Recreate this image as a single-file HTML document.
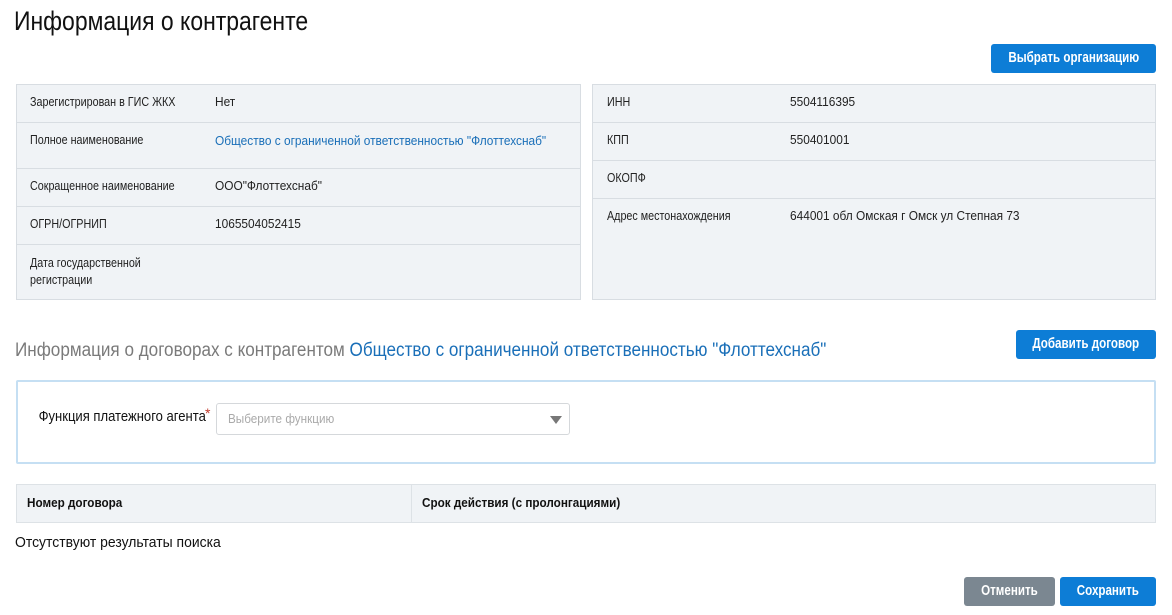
<!DOCTYPE html>
<html><head><meta charset="utf-8"><style>
*{margin:0;padding:0;box-sizing:border-box}
body{width:1172px;height:615px;background:#fff;font-family:"Liberation Sans",sans-serif;color:#222;position:relative;overflow:hidden}
.a{position:absolute;white-space:nowrap}
.c{display:inline-block;transform:scaleX(.84);transform-origin:left center}
.v{display:inline-block;transform:scaleX(.95);transform-origin:left center}
.cr{display:inline-block;transform:scaleX(.9);transform-origin:right center}
.cc{display:inline-block;transform:scaleX(.88);transform-origin:center center}
.panel{position:absolute;background:#f0f3f6;border:1px solid #d8dde2}
.row{position:absolute;left:0;right:0;border-bottom:1px solid #d8dde2}
.t{font-size:12.5px;color:#222}
.btn{position:absolute;color:#fff;font-size:14.5px;text-align:center;border-radius:3px;line-height:29px;background:#0d7dd6;font-weight:bold}
.blue{color:#1a6fb8}
</style></head><body>
<div class="a" style="left:14px;top:6px;font-size:27px;color:#111"><span class="c" style="transform:scaleX(.85)">Информация о контрагенте</span></div>
<div class="btn" style="left:991px;top:44px;width:165px;height:29px"><span class="cc" style="transform:scaleX(.8)">Выбрать организацию</span></div>

<div class="panel" style="left:16px;top:84px;width:565px;height:216px">
 <div class="row" style="top:0;height:38px"></div>
 <div class="row" style="top:38px;height:46px"></div>
 <div class="row" style="top:84px;height:38px"></div>
 <div class="row" style="top:122px;height:38px"></div>
</div>
<div class="a t" style="left:30px;top:95px"><span class="c" style="transform:scaleX(.86)">Зарегистрирован в ГИС ЖКХ</span></div>
<div class="a t" style="left:215px;top:95px"><span class="v">Нет</span></div>
<div class="a t" style="left:30px;top:133px"><span class="c" style="transform:scaleX(.86)">Полное наименование</span></div>
<div class="a t blue" style="left:215px;top:134px"><span class="v">Общество с ограниченной ответственностью "Флоттехснаб"</span></div>
<div class="a t" style="left:30px;top:179px"><span class="c" style="transform:scaleX(.86)">Сокращенное наименование</span></div>
<div class="a t" style="left:215px;top:179px"><span class="v">ООО"Флоттехснаб"</span></div>
<div class="a t" style="left:30px;top:217px"><span class="c" style="transform:scaleX(.86)">ОГРН/ОГРНИП</span></div>
<div class="a t" style="left:215px;top:217px"><span class="v">1065504052415</span></div>
<div class="a t" style="left:30px;top:255px;line-height:17px"><span class="c" style="transform:scaleX(.86)">Дата государственной<br>регистрации</span></div>

<div class="panel" style="left:592px;top:84px;width:564px;height:216px">
 <div class="row" style="top:0;height:38px"></div>
 <div class="row" style="top:38px;height:38px"></div>
 <div class="row" style="top:76px;height:38px"></div>
</div>
<div class="a t" style="left:607px;top:95px"><span class="c" style="transform:scaleX(.86)">ИНН</span></div>
<div class="a t" style="left:790px;top:95px"><span class="v">5504116395</span></div>
<div class="a t" style="left:607px;top:133px"><span class="c" style="transform:scaleX(.86)">КПП</span></div>
<div class="a t" style="left:790px;top:133px"><span class="v">550401001</span></div>
<div class="a t" style="left:607px;top:171px"><span class="c" style="transform:scaleX(.86)">ОКОПФ</span></div>
<div class="a t" style="left:607px;top:209px"><span class="c" style="transform:scaleX(.86)">Адрес местонахождения</span></div>
<div class="a t" style="left:790px;top:209px"><span class="v">644001 обл Омская г Омск ул Степная 73</span></div>

<div class="a" style="left:15px;top:340px;font-size:19px;color:#7a7a7a"><span class="c" style="transform:scaleX(.9)">Информация о договорах с контрагентом <span class="blue">Общество с ограниченной ответственностью "Флоттехснаб"</span></span></div>
<div class="btn" style="left:1016px;top:330px;width:140px;height:29px"><span class="cc" style="transform:scaleX(.8)">Добавить договор</span></div>

<div class="a" style="left:16px;top:380px;width:1140px;height:84px;border:2px solid #c5dff3;border-radius:2px"></div>
<div class="a" style="left:0;width:206px;text-align:right;top:409px;font-size:14.5px;color:#111"><span class="cr">Функция платежного агента</span></div>
<div class="a" style="left:205px;top:405px;color:#c0392b;font-size:14px">*</div>
<div class="a" style="left:216px;top:403px;width:354px;height:32px;border:1px solid #d5d8db;border-radius:3px;background:#fff"></div>
<div class="a" style="left:228px;top:411px;font-size:13px;color:#aaa"><span class="c" style="transform:scaleX(.9)">Выберите функцию</span></div>
<div class="a" style="left:550px;top:416px;width:0;height:0;border-left:6px solid transparent;border-right:6px solid transparent;border-top:8px solid #777"></div>

<div class="a" style="left:16px;top:484px;width:1140px;height:39px;background:#f0f3f6;border:1px solid #dde2e6"></div>
<div class="a" style="left:411px;top:485px;width:1px;height:37px;background:#dde2e6"></div>
<div class="a" style="left:27px;top:495px;font-size:13px;font-weight:bold;color:#111"><span class="c" style="transform:scaleX(.9)">Номер договора</span></div>
<div class="a" style="left:422px;top:495px;font-size:13px;font-weight:bold;color:#111"><span class="c" style="transform:scaleX(.9)">Срок действия (с пролонгациями)</span></div>
<div class="a" style="left:15px;top:534px;font-size:15px;color:#111"><span class="c" style="transform:scaleX(.93)">Отсутствуют результаты поиска</span></div>

<div class="btn" style="left:964px;top:577px;width:91px;height:29px;background:#7b8791"><span class="cc" style="transform:scaleX(.8)">Отменить</span></div>
<div class="btn" style="left:1060px;top:577px;width:96px;height:29px"><span class="cc" style="transform:scaleX(.8)">Сохранить</span></div>
</body></html>
